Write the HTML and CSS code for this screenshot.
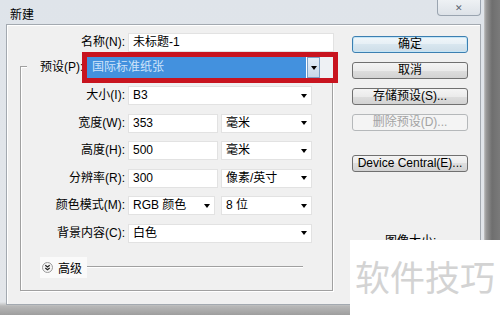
FILE: index.html
```html
<!DOCTYPE html>
<html lang="zh-CN">
<head>
    <meta charset="UTF-8">
    <title>新建</title>
    <link rel="stylesheet" href="styles.css">
</head>
<body>
    <div class="screen">
        <div class="window">
            <div class="titlebar">
                <span class="title">新建</span>
                <span class="close">✕</span>
            </div>
            <div class="client">
                <div class="form">
                    <div class="name-row">
                        <span class="label">名称(N):</span>
                        <div class="input name-input">未标题-1</div>
                    </div>

                    <div class="preset-row">
                        <span class="preset-label">预设(P):</span>
                        <div class="mark">
                            <div class="preset-select">
                                <span class="preset-value">国际标准纸张</span>
                                <span class="preset-btn"><i class="arrow"></i></span>
                            </div>
                            <span class="preset-rest"></span>
                        </div>
                    </div>

                    <div class="group">
                        <div class="grid">
                            <span class="label">大小(I):</span>
                            <div class="select span2">B3<i class="arrow"></i></div>

                            <span class="label">宽度(W):</span>
                            <div class="input">353</div>
                            <div class="select">毫米<i class="arrow"></i></div>

                            <span class="label">高度(H):</span>
                            <div class="input">500</div>
                            <div class="select">毫米<i class="arrow"></i></div>

                            <span class="label">分辨率(R):</span>
                            <div class="input">300</div>
                            <div class="select">像素/英寸<i class="arrow"></i></div>

                            <span class="label">颜色模式(M):</span>
                            <div class="select mode">RGB 颜色<i class="arrow"></i></div>
                            <div class="select">8 位<i class="arrow"></i></div>

                            <span class="label">背景内容(C):</span>
                            <div class="select span2">白色<i class="arrow"></i></div>
                        </div>

                        <div class="advanced">
                            <span class="adv-tag">
                                <span class="adv-icon">
                                    <svg width="11" height="11" viewBox="0 0 11 11">
                                        <circle cx="5.5" cy="5.5" r="5" fill="#f4f4f4" stroke="#9a9a9a"/>
                                        <path d="M3.3 3.2 L5.5 5 L7.7 3.2 M3.3 6 L5.5 7.8 L7.7 6" fill="none" stroke="#222" stroke-width="1.2"/>
                                    </svg>
                                </span>
                                高级
                            </span>
                            <span class="adv-line"></span>
                        </div>
                    </div>
                </div>

                <div class="side">
                    <div class="buttons">
                        <div class="btn default">确定</div>
                        <div class="btn">取消</div>
                        <div class="btn">存储预设(S)...</div>
                        <div class="btn disabled">删除预设(D)...</div>
                        <div class="btn device">Device Central(E)...</div>
                    </div>
                    <div class="info">图像大小:</div>
                </div>
            </div>
        </div>
        <div class="watermark">软件技巧</div>
    </div>
</body>
</html>
```

FILE: styles.css
```css
body {
    margin: 0;
    font-family: "Liberation Sans", "Noto Sans CJK SC", sans-serif;
    font-size: 12px;
    color: #000;
}
.screen {
    position: relative;
    width: 500px;
    height: 315px;
    overflow: hidden;
    background: linear-gradient(to right, #c4c4c4 0, #c4c4c4 484px, #9a9a9a 486px, #6f6f6f 492px, #7a7a7a 500px);
}
.window {
    width: 484px;
    height: 315px;
    box-sizing: border-box;
    padding: 0 3px 0 6px;
    background: linear-gradient(to bottom, #dfe4ea 0, #e3e6ea 302px, #b8b8b8 306px, #9e9e9e 315px);
}
.titlebar {
    height: 24px;
    display: flex;
    justify-content: space-between;
    align-items: flex-start;
}
.title {
    padding: 5px 0 0 4px;
}
.close {
    width: 44px;
    height: 16px;
    box-sizing: border-box;
    border: 1px solid #9aa4b0;
    border-top: none;
    border-radius: 0 0 4px 4px;
    background: linear-gradient(#eef1f4, #dde2e8);
    display: flex;
    align-items: center;
    justify-content: center;
    font-size: 9px;
    color: #5b6470;
}
.client {
    height: 281px;
    box-sizing: border-box;
    border: 1px solid #a3a9b0;
    box-shadow: inset 1px 1px #fff;
    background: #f0f0f0;
    display: flex;
}
.form {
    margin: 8px 0 0 13px;
    width: 314px;
    flex: none;
}
.label {
    text-align: right;
    padding-right: 3px;
    line-height: 19px;
    white-space: nowrap;
}
.name-row {
    display: flex;
    height: 19px;
}
.name-row .label {
    width: 105px;
}
.input,
.select {
    height: 19px;
    box-sizing: border-box;
    background: #fff;
    border: 1px solid #e2e2e2;
    padding-left: 4px;
    line-height: 17px;
    white-space: nowrap;
}
.name-input {
    width: 206px;
}
.select {
    display: flex;
    align-items: center;
    justify-content: space-between;
    padding-right: 4px;
}
.arrow {
    width: 0;
    height: 0;
    border-left: 3.5px solid transparent;
    border-right: 3.5px solid transparent;
    border-top: 4px solid #000;
}
.preset-row {
    display: flex;
    height: 31px;
    position: relative;
    z-index: 1;
}
.preset-label {
    margin-left: 7px;
    padding-left: 13px;
    width: 42px;
    background: #f0f0f0;
    line-height: 31px;
    white-space: nowrap;
}
.mark {
    flex: none;
    width: 256px;
    height: 31px;
    box-sizing: border-box;
    border: 5px solid #c8141f;
    display: flex;
}
.preset-select {
    width: 233px;
    display: flex;
    background: #fff;
}
.preset-value {
    flex: 1;
    background: #4391de;
    color: #cfe4fa;
    padding-left: 5px;
    line-height: 21px;
    margin-right: 1px;
}
.preset-btn {
    width: 13px;
    box-sizing: border-box;
    border: 1px solid #7c9fc4;
    background: linear-gradient(#e4eef8, #c8d9ea);
    display: flex;
    align-items: center;
    justify-content: center;
}
.preset-rest {
    flex: 1;
    background: #eef1f4;
}
.group {
    width: 313px;
    box-sizing: border-box;
    margin-top: -17px;
    border: 1px solid #a0a0a0;
    box-shadow: inset 1px 1px #fff, 1px 1px #fff;
    padding: 19px 0 12px;
}
.grid {
    display: grid;
    grid-template-columns: 107px 93px 91px;
    grid-auto-rows: 19px;
    row-gap: 8.5px;
}
.grid .input {
    width: 90px;
}
.span2 {
    grid-column: span 2;
}
.grid .mode {
    width: 87px;
}
.advanced {
    margin-top: 14px;
    height: 21px;
    display: flex;
    align-items: center;
    padding-left: 19px;
}
.adv-tag {
    display: flex;
    align-items: center;
    gap: 5px;
    height: 21px;
    padding: 0 5px 0 2px;
    background: #fafafa;
}
.adv-icon {
    display: flex;
}
.adv-line {
    width: 216px;
    border-top: 1px solid #a0a0a0;
    border-bottom: 1px solid #fff;
}
.side {
    margin: 11px 0 0 18px;
    width: 116px;
}
.buttons {
    display: flex;
    flex-direction: column;
    gap: 9px;
}
.btn {
    height: 17px;
    box-sizing: border-box;
    border: 1px solid #707070;
    border-radius: 3px;
    background: linear-gradient(#f4f4f4 0, #ebebeb 50%, #dedede 50%, #d2d2d2 100%);
    text-align: center;
    line-height: 15px;
    white-space: nowrap;
}
.btn.default {
    border-color: #3c7fb1;
    box-shadow: inset 0 0 0 1px #c4e5f6;
    background: linear-gradient(#f0f6fa 0, #e6eff5 50%, #d8e6ef 50%, #cddde8 100%);
}
.btn.disabled {
    color: #a3a3a3;
    border-color: #b5b8ba;
    background: #f4f4f4;
}
.btn.device {
    margin-top: 15px;
}
.info {
    margin-top: 59px;
    padding-left: 33px;
}
.watermark {
    position: absolute;
    left: 350px;
    top: 240px;
    width: 150px;
    height: 75px;
    box-sizing: border-box;
    padding: 18px 0 0 5px;
    background: #fff;
    font-family: "Noto Sans CJK SC", sans-serif;
    font-size: 35px;
    line-height: 35px;
    color: #d3d3d3;
}
```
